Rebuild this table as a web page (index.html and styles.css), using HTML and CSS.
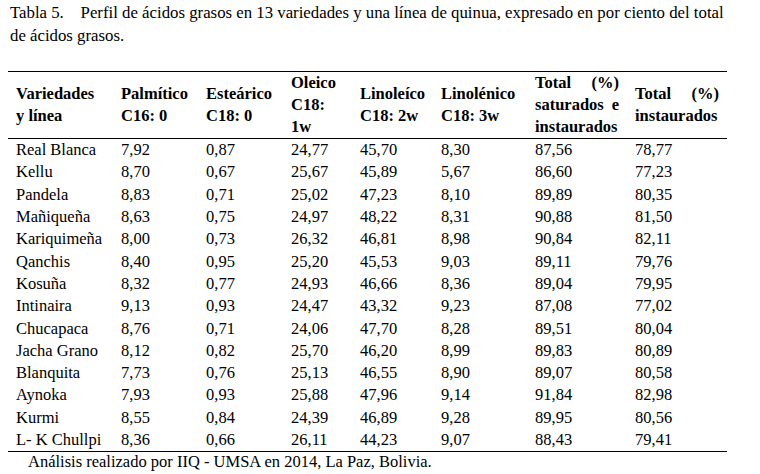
FILE: index.html
```html
<!DOCTYPE html>
<html lang="es">
<head>
<meta charset="utf-8">
<title>Tabla 5</title>
<link rel="stylesheet" href="styles.css">
</head>
<body>
<div class="page">
  <p class="caption">Tabla 5.&nbsp;&nbsp;&nbsp; Perfil de ácidos grasos en 13 variedades y una línea de quinua, expresado en por ciento del total de ácidos grasos.</p>
  <table class="data">
    <colgroup>
      <col class="c1"><col class="c2"><col class="c3"><col class="c4"><col class="c5"><col class="c6"><col class="c7"><col class="c8">
    </colgroup>
    <thead>
      <tr>
        <th>Variedades y línea</th>
        <th>Palmítico C16: 0</th>
        <th>Esteárico C18: 0</th>
        <th>Oleico C18: 1w</th>
        <th>Linoleíco C18: 2w</th>
        <th>Linolénico C18: 3w</th>
        <th class="just">Total (%) saturados e instaurados</th>
        <th class="just">Total (%) instaurados</th>
      </tr>
    </thead>
    <tbody>
      <tr><td>Real Blanca</td><td>7,92</td><td>0,87</td><td>24,77</td><td>45,70</td><td>8,30</td><td>87,56</td><td>78,77</td></tr>
      <tr><td>Kellu</td><td>8,70</td><td>0,67</td><td>25,67</td><td>45,89</td><td>5,67</td><td>86,60</td><td>77,23</td></tr>
      <tr><td>Pandela</td><td>8,83</td><td>0,71</td><td>25,02</td><td>47,23</td><td>8,10</td><td>89,89</td><td>80,35</td></tr>
      <tr><td>Mañiqueña</td><td>8,63</td><td>0,75</td><td>24,97</td><td>48,22</td><td>8,31</td><td>90,88</td><td>81,50</td></tr>
      <tr><td>Kariquimeña</td><td>8,00</td><td>0,73</td><td>26,32</td><td>46,81</td><td>8,98</td><td>90,84</td><td>82,11</td></tr>
      <tr><td>Qanchis</td><td>8,40</td><td>0,95</td><td>25,20</td><td>45,53</td><td>9,03</td><td>89,11</td><td>79,76</td></tr>
      <tr><td>Kosuña</td><td>8,32</td><td>0,77</td><td>24,93</td><td>46,66</td><td>8,36</td><td>89,04</td><td>79,95</td></tr>
      <tr><td>Intinaira</td><td>9,13</td><td>0,93</td><td>24,47</td><td>43,32</td><td>9,23</td><td>87,08</td><td>77,02</td></tr>
      <tr><td>Chucapaca</td><td>8,76</td><td>0,71</td><td>24,06</td><td>47,70</td><td>8,28</td><td>89,51</td><td>80,04</td></tr>
      <tr><td>Jacha Grano</td><td>8,12</td><td>0,82</td><td>25,70</td><td>46,20</td><td>8,99</td><td>89,83</td><td>80,89</td></tr>
      <tr><td>Blanquita</td><td>7,73</td><td>0,76</td><td>25,13</td><td>46,55</td><td>8,90</td><td>89,07</td><td>80,58</td></tr>
      <tr><td>Aynoka</td><td>7,93</td><td>0,93</td><td>25,88</td><td>47,96</td><td>9,14</td><td>91,84</td><td>82,98</td></tr>
      <tr><td>Kurmi</td><td>8,55</td><td>0,84</td><td>24,39</td><td>46,89</td><td>9,28</td><td>89,95</td><td>80,56</td></tr>
      <tr><td>L- K Chullpi</td><td>8,36</td><td>0,66</td><td>26,11</td><td>44,23</td><td>9,07</td><td>88,43</td><td>79,41</td></tr>
    </tbody>
  </table>
  <p class="note">Análisis realizado por IIQ - UMSA en 2014, La Paz, Bolivia.</p>
</div>
</body>
</html>
```

FILE: styles.css
```css
html, body {
  margin: 0;
  padding: 0;
  background: #ffffff;
}
body {
  font-family: "Liberation Serif", "Times New Roman", serif;
  color: #000000;
  font-size: 16.5px;
}
.page {
  width: 719px;
  padding: 1px 0 0 8px;
}
.caption {
  margin: 0;
  padding-left: 2px;
  line-height: 23px;
  font-size: 16.8px;
}
.data {
  margin-top: 24px;
  width: 719px;
  border-collapse: collapse;
  table-layout: fixed;
  border-top: 1px solid #000;
  border-bottom: 1px solid #000;
}
.c1 { width: 105px; }
.c2 { width: 85px; }
.c3 { width: 85px; }
.c4 { width: 69px; }
.c5 { width: 81px; }
.c6 { width: 94px; }
.c7 { width: 100px; }
.c8 { width: 100px; }
.data th {
  font-weight: bold;
  text-align: left;
  vertical-align: middle;
  line-height: 22px;
  padding: 0 8px;
  height: 66px;
  border-bottom: 1px solid #000;
}
.data th.just {
  text-align: justify;
  text-align-last: left;
}
.data td {
  padding: 0 8px;
  height: 22.3px;
  line-height: 20px;
  vertical-align: middle;
  white-space: nowrap;
}
.note {
  margin: 0 0 0 20px;
  line-height: 20px;
}
```
